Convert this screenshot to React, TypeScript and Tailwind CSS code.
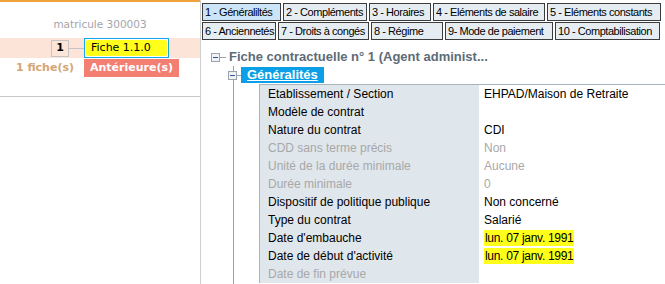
import React from "react";

// ── Data ──────────────────────────────────────────────────────────────────────

// widths are written out in full so Tailwind picks them up
const TABS_ROW_1 = [
  { label: "1 - Généraliltés", w: "w-[79px]" },
  { label: "2 - Compléments", w: "w-[84px]" },
  { label: "3 - Horaires", w: "w-[62px]" },
  { label: "4 - Eléments de salaire", w: "w-[112px]" },
  { label: "5 - Eléments constants", w: "w-[114px]" },
];

const TABS_ROW_2 = [
  { label: "6 - Anciennetés", w: "w-[74px]" },
  { label: "7 - Droits à congés", w: "w-[91px]" },
  { label: "8 - Régime", w: "w-[72px]" },
  { label: "9- Mode de paiement", w: "w-[108px]" },
  { label: "10 - Comptabilisation", w: "w-[105px]" },
];

type Field = { label: string; value?: string; disabled?: boolean; marked?: boolean };

const FIELDS: Field[] = [
  { label: "Etablissement / Section", value: "EHPAD/Maison de Retraite" },
  { label: "Modèle de contrat" },
  { label: "Nature du contrat", value: "CDI" },
  { label: "CDD sans terme précis", value: "Non", disabled: true },
  { label: "Unité de la durée minimale", value: "Aucune", disabled: true },
  { label: "Durée minimale", value: "0", disabled: true },
  { label: "Dispositif de politique publique", value: "Non concerné" },
  { label: "Type du contrat", value: "Salarié" },
  { label: "Date d'embauche", value: "lun. 07 janv. 1991", marked: true },
  { label: "Date de début d'activité", value: "lun. 07 janv. 1991", marked: true },
  { label: "Date de fin prévue", disabled: true },
];

// ── Pieces ────────────────────────────────────────────────────────────────────

function Tab({ label, w, active }: { label: string; w: string; active?: boolean }) {
  return (
    <div
      className={`${w} shrink-0 h-[18px] pl-[2px] border border-[#3c3c3c] leading-[16px] text-[11px] tracking-[-0.45px] text-black whitespace-nowrap overflow-hidden ${
        active ? "bg-[#cce4f7]" : "bg-[#e6edf2]"
      }`}
    >
      {label}
    </div>
  );
}

function MinusBox() {
  return (
    <span className="w-[9px] h-[9px] border border-[#9aa4ae] bg-[#f0f2f4] flex items-center justify-center shrink-0">
      <span className="w-[5px] h-[1px] bg-[#3050a0]" />
    </span>
  );
}

// ── App ───────────────────────────────────────────────────────────────────────

export default function App() {
  return (
    <div className="w-[665px] h-[284px] flex overflow-hidden bg-white font-['Liberation_Sans',sans-serif]">
      {/* Left panel */}
      <aside className="w-[201px] shrink-0 border-r border-[#cfcfcf] flex flex-col font-['DejaVu_Sans',sans-serif]">
        <div className="h-[2px] bg-[#f0a23c]" />
        <div className="mt-[16px] h-[13px] leading-[13px] text-center text-[10.5px] text-[#a4a4ac]">
          matricule 300003
        </div>
        <div className="mt-[7px] h-[20px] bg-[#fde4d8] flex items-center">
          <span className="ml-[51px] w-[18px] h-[17px] border border-[#c4c4c4] flex items-center justify-center text-[11px] font-bold text-black">
            1
          </span>
          <span className="w-[15px] h-[1px] bg-[#c4c4c4]" />
          <span className="w-[85px] h-[20px] border border-[#14a8e6] bg-white flex items-center p-[1px]">
            <span className="flex-1 h-full bg-[#ffff1a] rounded-[2px] flex items-center pl-[5px] text-[11px] text-black">
              Fiche 1.1.0
            </span>
          </span>
        </div>
        <div className="mt-[1px] h-[18px] flex items-center">
          <span className="w-[74px] text-right text-[11px] font-bold text-[#d6a672]">1 fiche(s)</span>
          <span className="ml-[10px] w-[95px] h-[18px] bg-[#f37e72] text-white text-[11px] font-bold flex items-center justify-center">
            Antérieure(s)
          </span>
        </div>
        <div className="mt-[19px] h-[1px] bg-[#c8c8c8]" />
      </aside>

      {/* Right panel */}
      <main className="flex-1 min-w-0 flex flex-col pl-[1px]">
        <div className="pt-[3px] flex flex-col gap-[1px]">
          <div className="flex gap-[2px]">
            {TABS_ROW_1.map((t, i) => (
              <Tab key={t.label} label={t.label} w={t.w} active={i === 0} />
            ))}
          </div>
          <div className="flex gap-[2px]">
            {TABS_ROW_2.map((t) => (
              <Tab key={t.label} label={t.label} w={t.w} />
            ))}
          </div>
        </div>

        {/* Tree */}
        <div className="mt-[8px] h-[18px] flex items-center pl-[9px]">
          <MinusBox />
          <span className="w-[6px] h-[1px] bg-[#9aa4ae]" />
          <span className="ml-[3px] text-[13px] font-bold text-[#5d6b78] whitespace-nowrap">
            Fiche contractuelle n° 1 (Agent administ...
          </span>
        </div>

        <div className="relative flex-1 flex flex-col">
          {/* vertical tree guide */}
          <span className="absolute left-[31px] top-0 bottom-0 w-[1px] bg-[#a0a0a0]" />
          <div className="relative h-[18px] flex items-center pl-[26px]">
            <MinusBox />
            <span className="w-[4px] h-[1px] bg-[#9aa4ae]" />
            <span className="h-[16px] px-[6px] bg-[#0a9fe6] text-white text-[13px] font-bold underline leading-[16px]">
              Généralités
            </span>
          </div>

          <div className="relative ml-[57px] border-t border-l border-[#a9b4bd] flex flex-col">
            {FIELDS.map((f) => (
              <div key={f.label} className="h-[18px] flex text-[12px] leading-[18px]">
                <div
                  className={`w-[219px] shrink-0 bg-[#dfe6ec] pl-[8px] whitespace-nowrap ${
                    f.disabled ? "text-[#a8a8a8]" : "text-black"
                  }`}
                >
                  {f.label}
                </div>
                <div className={`pl-[5px] whitespace-nowrap ${f.disabled ? "text-[#a8a8a8]" : "text-black"}`}>
                  {f.marked ? (
                    <span className="bg-[#ffff1a] px-[1px] py-[1px] tracking-[-0.3px]">{f.value}</span>
                  ) : (
                    f.value
                  )}
                </div>
              </div>
            ))}
          </div>
        </div>
      </main>
    </div>
  );
}
